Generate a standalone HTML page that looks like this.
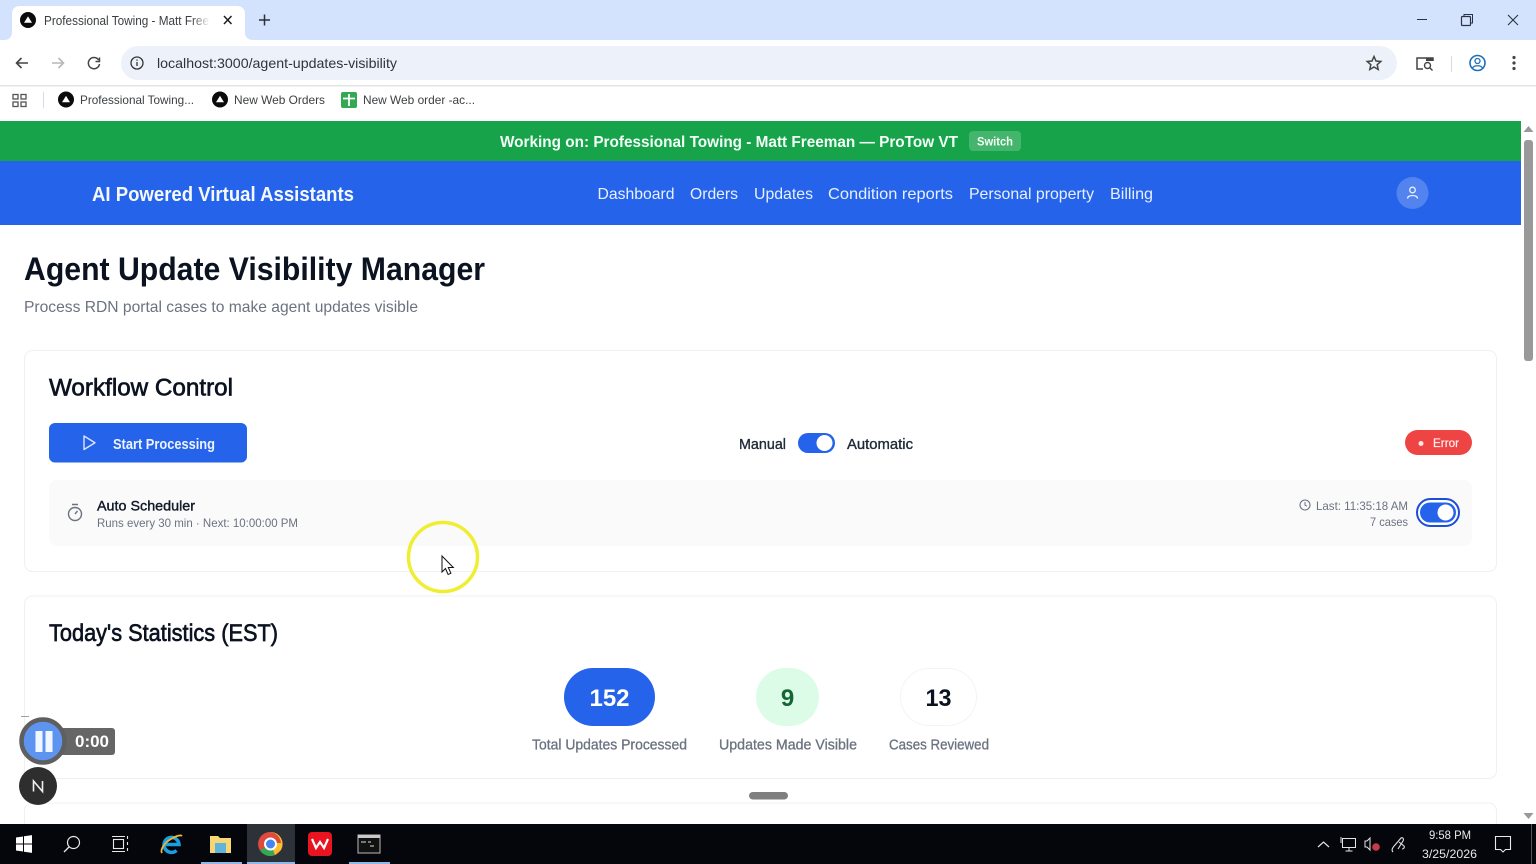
<!DOCTYPE html>
<html lang="en"><head><meta charset="utf-8"><title>Agent Update Visibility Manager</title>
<style>
html,body{margin:0;padding:0;width:1536px;height:864px;overflow:hidden;background:#fff}
svg{display:block}
text{font-family:"Liberation Sans",sans-serif;white-space:pre}
</style></head><body>
<svg width="1536" height="864" viewBox="0 0 1536 864" xmlns="http://www.w3.org/2000/svg">
<defs>
<g id="fav"><circle r="8" fill="#0b0b0b"/><path d="M0-3.6 4 2.8H-4Z" fill="#fff"/></g>
<linearGradient id="fade" x1="0" x2="1" y1="0" y2="0"><stop offset="0" stop-color="#fff" stop-opacity="0"/><stop offset="1" stop-color="#fff"/></linearGradient>
</defs>
<!-- tab strip -->
<rect width="1536" height="40" fill="#d3e3fd"/>
<path d="M4 40C10 40 12 36 12 32V14C12 9 15 6 20 6H237C242 6 245 9 245 14V32C245 36 247 40 253 40Z" fill="#fff"/>
<use href="#fav" x="28" y="20"/>
<text x="44" y="25" font-size="12.5" fill="#3c4043" textLength="165" lengthAdjust="spacingAndGlyphs">Professional Towing - Matt Free</text>
<rect x="192" y="10" width="18" height="20" fill="url(#fade)"/>
<path d="M224 16l7.500 8M231.500 16l-7.500 8" stroke="#1f1f1f" stroke-width="1.500" fill="none"/>
<path d="M264.500 14.500v11M259 20h11" stroke="#2b2f36" stroke-width="1.500" fill="none"/>
<path d="M1417 19.500h10" stroke="#2a3340" stroke-width="1"/>
<rect x="1461.500" y="16.500" width="9" height="9" fill="none" stroke="#2a3340" stroke-width="1.200" rx="1"/>
<path d="M1464 16v-1.500h8.500v8.500H1471" fill="none" stroke="#2a3340" stroke-width="1"/>
<path d="M1508 15l10 10M1518 15l-10 10" stroke="#2a3340" stroke-width="1.100"/>
<!-- toolbar -->
<rect y="40" width="1536" height="46" fill="#fff"/>
<rect y="85" width="1536" height="1.500" fill="#e4e4e4"/>
<path d="M28 63H17M21.500 58l-5 5 5 5" stroke="#444" stroke-width="1.600" fill="none"/>
<path d="M52 63h11M58.500 58l5 5-5 5" stroke="#b5b7ba" stroke-width="1.600" fill="none"/>
<path d="M98.600 60A5.600 5.600 0 1 0 99.500 64M99.500 57.500v4h-4" stroke="#444" stroke-width="1.500" fill="none"/>
<rect x="121" y="46" width="1276" height="34" rx="17" fill="#edf2fa"/>
<circle cx="137" cy="63" r="6" fill="none" stroke="#333" stroke-width="1.300"/>
<path d="M137 62v4M137 59.500v1.300" stroke="#333" stroke-width="1.300"/>
<text x="157" y="68" font-size="14" fill="#30343a" textLength="240" lengthAdjust="spacingAndGlyphs">localhost:3000/agent-updates-visibility</text>
<path d="M1374 56.500l2 4.500 4.800.5-3.600 3.200 1 4.800-4.200-2.500-4.200 2.500 1-4.800-3.600-3.200 4.800-.5Z" fill="none" stroke="#444" stroke-width="1.500"/>
<path d="M1423 69h-6V58h16v3" fill="none" stroke="#444" stroke-width="1.500"/>
<rect x="1426" y="57.500" width="7.500" height="3.500" fill="#444"/>
<circle cx="1427.500" cy="65.500" r="3" fill="none" stroke="#444" stroke-width="1.400"/><path d="M1430 68l2.500 2.500" stroke="#444" stroke-width="1.400"/>
<rect x="1451" y="56" width="1" height="16" fill="#d8dadd"/>
<circle cx="1477.500" cy="63" r="7.500" fill="none" stroke="#1f6fb8" stroke-width="1.600"/>
<circle cx="1477.500" cy="61" r="2.500" fill="none" stroke="#1f6fb8" stroke-width="1.300"/>
<path d="M1472.500 68c1.500-3 8.500-3 10 0" fill="none" stroke="#1f6fb8" stroke-width="1.300"/>
<g fill="#444"><circle cx="1514" cy="57.500" r="1.600"/><circle cx="1514" cy="63" r="1.600"/><circle cx="1514" cy="68.500" r="1.600"/></g>
<!-- bookmarks -->
<rect y="87" width="1536" height="34" fill="#fff"/>
<g fill="none" stroke="#555" stroke-width="1.300"><rect x="13" y="94.500" width="5" height="4.500"/><rect x="21" y="94.500" width="5" height="4.500"/><rect x="13" y="102" width="5" height="4.500"/><rect x="21" y="102" width="5" height="4.500"/></g>
<rect x="43" y="92" width="1" height="16" fill="#d5dbe6"/>
<use href="#fav" x="66" y="99.500"/>
<text x="80" y="104" font-size="12" fill="#3c4043" textLength="114" lengthAdjust="spacingAndGlyphs">Professional Towing...</text>
<use href="#fav" x="220" y="99.500"/>
<text x="234" y="104" font-size="12" fill="#3c4043" textLength="91" lengthAdjust="spacingAndGlyphs">New Web Orders</text>
<rect x="341" y="92" width="16" height="16" rx="2" fill="#34a853"/>
<path d="M349 94v12M343 98.500h12" stroke="#fff" stroke-width="1.800"/>
<text x="363" y="104" font-size="12" fill="#3c4043" textLength="112" lengthAdjust="spacingAndGlyphs">New Web order -ac...</text>
<!-- green bar -->
<rect y="121" width="1521" height="40" fill="#16a34a"/>
<text x="500" y="147" font-size="16" font-weight="700" fill="#f3fff7" textLength="458" lengthAdjust="spacingAndGlyphs">Working on: Professional Towing - Matt Freeman — ProTow VT</text>
<rect x="969" y="131" width="52" height="20" rx="4" fill="#45b56e"/>
<text x="977" y="145.500" font-size="12" font-weight="700" fill="#f3fff7" textLength="36" lengthAdjust="spacingAndGlyphs">Switch</text>
<!-- nav -->
<rect y="161" width="1521" height="64" fill="#2563eb"/>
<text x="92" y="201" font-size="20" font-weight="700" fill="#f5f9ff" textLength="262" lengthAdjust="spacingAndGlyphs">AI Powered Virtual Assistants</text>
<g font-size="16" fill="#e8f0fe">
<text x="597.500" y="199" textLength="77" lengthAdjust="spacingAndGlyphs">Dashboard</text>
<text x="690" y="199" textLength="48" lengthAdjust="spacingAndGlyphs">Orders</text>
<text x="754" y="199" textLength="59" lengthAdjust="spacingAndGlyphs">Updates</text>
<text x="828" y="199" textLength="125" lengthAdjust="spacingAndGlyphs">Condition reports</text>
<text x="969" y="199" textLength="125" lengthAdjust="spacingAndGlyphs">Personal property</text>
<text x="1110" y="199" textLength="43" lengthAdjust="spacingAndGlyphs">Billing</text>
</g>
<circle cx="1412.500" cy="193" r="16" fill="#5283ef"/>
<circle cx="1412.500" cy="190" r="2.800" fill="none" stroke="#e8f0fe" stroke-width="1.300"/>
<path d="M1407.500 198.500c0-4 10-4 10 0" fill="none" stroke="#e8f0fe" stroke-width="1.300"/>
<!-- scrollbar -->
<rect x="1521" y="121" width="15" height="703" fill="#fff"/>
<rect x="1524" y="140" width="9" height="221" rx="3" fill="#999"/>
<path d="M1528.500 126l5 6h-10Z" fill="#999"/>
<path d="M1528.500 819l5-6h-10Z" fill="#999"/>
<!-- page heading -->
<text x="24" y="280" font-size="32" font-weight="700" fill="#0b1220" textLength="461" lengthAdjust="spacingAndGlyphs">Agent Update Visibility Manager</text>
<text x="24" y="312" font-size="16" fill="#6b7280" textLength="394" lengthAdjust="spacingAndGlyphs">Process RDN portal cases to make agent updates visible</text>
<!-- card 1 -->
<rect x="24.500" y="350.500" width="1472" height="221" rx="8" fill="#fff" stroke="#eff0f2"/>
<text x="49" y="395.500" font-size="24" fill="#0b1220" stroke="#0b1220" stroke-width=".65" textLength="184" lengthAdjust="spacingAndGlyphs">Workflow Control</text>
<rect x="49" y="423" width="198" height="39.500" rx="6" fill="#2563eb"/>
<path d="M84 436v13.500l11-6.750Z" fill="none" stroke="#dbe7ff" stroke-width="1.400" stroke-linejoin="round"/>
<text x="113" y="449" font-size="14.500" font-weight="700" fill="#eef4ff" textLength="102" lengthAdjust="spacingAndGlyphs">Start Processing</text>
<text x="739" y="449" font-size="14.500" fill="#1f2937" stroke="#1f2937" stroke-width=".35" textLength="47" lengthAdjust="spacingAndGlyphs">Manual</text>
<rect x="798" y="433" width="37" height="20" rx="10" fill="#2563eb"/>
<circle cx="824.500" cy="443" r="8" fill="#fff"/>
<text x="847" y="449" font-size="14.500" fill="#1f2937" stroke="#1f2937" stroke-width=".35" textLength="66" lengthAdjust="spacingAndGlyphs">Automatic</text>
<rect x="1405" y="430" width="67" height="25" rx="12.500" fill="#ef4444"/>
<circle cx="1421" cy="443.500" r="2.500" fill="#ffe9e9"/>
<text x="1433" y="447" font-size="12" fill="#fff0f0" stroke="#fff0f0" stroke-width=".2" textLength="26" lengthAdjust="spacingAndGlyphs">Error</text>
<!-- scheduler -->
<rect x="49" y="480" width="1423" height="66" rx="8" fill="#fafafb"/>
<circle cx="75" cy="514" r="6.500" fill="none" stroke="#6b7280" stroke-width="1.400"/>
<path d="M72 504.500h6M75 514l2.500-3" stroke="#6b7280" stroke-width="1.400" fill="none"/>
<text x="97" y="510.500" font-size="14" fill="#111827" stroke="#111827" stroke-width=".4" textLength="98" lengthAdjust="spacingAndGlyphs">Auto Scheduler</text>
<text x="97" y="527" font-size="12" fill="#6b7280" textLength="201" lengthAdjust="spacingAndGlyphs">Runs every 30 min · Next: 10:00:00 PM</text>
<circle cx="1305" cy="505" r="5" fill="none" stroke="#6b7280" stroke-width="1.100"/>
<path d="M1305 502v3.200l2 1" stroke="#6b7280" stroke-width="1" fill="none"/>
<text x="1316" y="510" font-size="12" fill="#6b7280" textLength="92" lengthAdjust="spacingAndGlyphs">Last: 11:35:18 AM</text>
<text x="1370" y="526" font-size="12" fill="#6b7280" textLength="38" lengthAdjust="spacingAndGlyphs">7 cases</text>
<rect x="1417" y="499" width="42" height="27" rx="13.500" fill="#fff" stroke="#1d4ed8" stroke-width="2"/>
<rect x="1420" y="502.500" width="36" height="20" rx="10" fill="#2563eb"/>
<circle cx="1445.500" cy="512.500" r="8" fill="#fff"/>
<!-- card 2 -->
<rect x="24.500" y="596" width="1472" height="182.500" rx="8" fill="#fff" stroke="#eff0f2"/>
<text x="49" y="641" font-size="24" fill="#0b1220" stroke="#0b1220" stroke-width=".65" textLength="229" lengthAdjust="spacingAndGlyphs">Today's Statistics (EST)</text>
<rect x="564" y="668" width="91" height="58" rx="29" fill="#2563eb"/>
<text x="609.500" y="706" font-size="24" font-weight="700" fill="#fff" text-anchor="middle" textLength="40" lengthAdjust="spacingAndGlyphs">152</text>
<rect x="756" y="668" width="63" height="58" rx="29" fill="#dcfce7"/>
<text x="787.500" y="706" font-size="24" font-weight="700" fill="#166534" text-anchor="middle">9</text>
<rect x="900.500" y="668.500" width="76" height="57" rx="28.500" fill="#fff" stroke="#f3f4f6"/>
<text x="938.500" y="706" font-size="24" font-weight="700" fill="#0b1220" text-anchor="middle" textLength="26" lengthAdjust="spacingAndGlyphs">13</text>
<text x="532" y="749.500" font-size="14.500" fill="#6b7280" stroke="#6b7280" stroke-width=".3" textLength="155" lengthAdjust="spacingAndGlyphs">Total Updates Processed</text>
<text x="719" y="749.500" font-size="14.500" fill="#6b7280" stroke="#6b7280" stroke-width=".3" textLength="138" lengthAdjust="spacingAndGlyphs">Updates Made Visible</text>
<text x="889" y="749.500" font-size="14.500" fill="#6b7280" stroke="#6b7280" stroke-width=".3" textLength="100" lengthAdjust="spacingAndGlyphs">Cases Reviewed</text>
<!-- card 3 -->
<rect x="24.500" y="803" width="1472" height="60" rx="8" fill="#fff" stroke="#eff0f2"/>
<rect x="749" y="792" width="39" height="7.500" rx="3.700" fill="#7f7f7f"/>
<!-- recorder overlays -->
<path d="M21 716.500h8" stroke="#9aa0a6" stroke-width="1"/>
<rect x="60" y="728" width="55" height="27" rx="3" fill="#666"/>
<text x="75" y="747" font-size="17" font-weight="700" fill="#fff" textLength="34" lengthAdjust="spacingAndGlyphs">0:00</text>
<circle cx="43" cy="741" r="21.500" fill="#5c94f0" stroke="#5f5f5f" stroke-width="4.500"/>
<rect x="35.500" y="731" width="7" height="21" fill="#f2f6ff"/>
<rect x="45.500" y="731" width="7" height="21" fill="#f2f6ff"/>
<circle cx="38" cy="786" r="19" fill="#2e2e2e"/>
<path d="M33.500 791.500v-10.500l9 10.500V781" fill="none" stroke="#f0f0f0" stroke-width="1.600"/>
<!-- highlighted cursor -->
<circle cx="443" cy="557" r="34.500" fill="none" stroke="#f0ee33" stroke-width="3.500"/>
<path d="M442 556v16l3.500-3.500 2.600 6 2.800-1.200-2.600-5.800h5Z" fill="#fff" stroke="#111" stroke-width="1"/>
<!-- taskbar -->
<rect y="824" width="1536" height="40" fill="#04060c"/>
<path d="M16 837.500l7-1v7h-7ZM24 836.300l8-1.200v8.400h-8ZM16 844.500h7v7l-7-1ZM24 844.500h8v8.400l-8-1.200Z" fill="#fff"/>
<circle cx="73.500" cy="842.500" r="6" fill="none" stroke="#e8e8e8" stroke-width="1.200"/>
<path d="M69 847l-5 5" stroke="#e8e8e8" stroke-width="1.300"/>
<g fill="none" stroke="#e8e8e8" stroke-width="1.100"><rect x="113.500" y="839.500" width="10" height="9"/><path d="M112 836.500h13M112 851.500h13M127.500 836v3M127.500 842v3M127.500 848v3"/></g>
<path d="M164 844.500h15a7.500 7.500 0 1 0-2.500 6" fill="none" stroke="#1aa0e0" stroke-width="3.500"/>
<path d="M162 853c-2-3 2-10 9-14s10-4 11-3" stroke="#f2b632" stroke-width="1.800" fill="none"/>
<path d="M210 836h8l2 2h11v15h-21Z" fill="#f7d774"/>
<rect x="215" y="843" width="11" height="10" fill="#5fb3dc"/>
<rect x="247" y="824" width="48" height="40" fill="#2d3138"/>
<circle cx="270.500" cy="844" r="12" fill="#dd4b3e"/>
<path d="M270.500 844L260 850.500A12 12 0 0 0 275 855Z" fill="#34a853"/>
<path d="M270.500 832A12 12 0 0 1 281 850L275 855 270.500 844Z" fill="#fbc02d"/>
<path d="M270.500 832A12 12 0 0 0 260 850.500L265 843h16A12 12 0 0 0 270.500 832Z" fill="#dd4b3e"/>
<circle cx="270.500" cy="844" r="5.500" fill="#4285f4" stroke="#fff" stroke-width="2"/>
<rect x="308" y="832" width="24" height="24" rx="4" fill="#e8141f"/>
<path d="M312 839l4 9 4-6 4 6 4-9" fill="none" stroke="#fff" stroke-width="2.200"/>
<rect x="358" y="835" width="22" height="18" fill="#111" stroke="#bbb" stroke-width="1"/>
<rect x="358" y="835" width="22" height="3" fill="#c9c9c9"/>
<path d="M361 842h5M368 842h3M370 846h4" stroke="#ddd" stroke-width="1"/>
<rect x="201" y="862" width="41" height="2" fill="#8fb8e6"/>
<rect x="247" y="862" width="48" height="2" fill="#8fb8e6"/>
<rect x="349" y="862" width="41" height="2" fill="#8fb8e6"/>
<path d="M1318 847l5.500-5 5.500 5" fill="none" stroke="#e4e4e4" stroke-width="1.200"/>
<rect x="1342.500" y="838.500" width="13" height="9" fill="none" stroke="#e4e4e4"/>
<path d="M1349 848v2.500M1345.500 851h7M1341 837v6" stroke="#e4e4e4" fill="none"/>
<path d="M1365 841h2l3-3v12l-3-3h-2Z" fill="none" stroke="#e4e4e4"/>
<circle cx="1376" cy="847" r="3.800" fill="#c73a4e"/>
<path d="M1393 852c-2-2 0-5 2-7l6-7c2-1 3 1 2 3l-5 8M1399 842l5 4c1 2-1 3-2 3" fill="none" stroke="#e4e4e4" stroke-width="1.100"/>
<text x="1450" y="839" font-size="12" fill="#e8e8e8" text-anchor="middle" textLength="42" lengthAdjust="spacingAndGlyphs">9:58 PM</text>
<text x="1449.500" y="858" font-size="12" fill="#e8e8e8" text-anchor="middle" textLength="55" lengthAdjust="spacingAndGlyphs">3/25/2026</text>
<path d="M1495.500 836.500h15v13h-5l-2.500 2.500-2.500-2.500h-5Z" fill="none" stroke="#e8e8e8" stroke-width="1.100"/>
<rect x="1531" y="824" width="1" height="40" fill="#555"/>
</svg>
</body></html>
